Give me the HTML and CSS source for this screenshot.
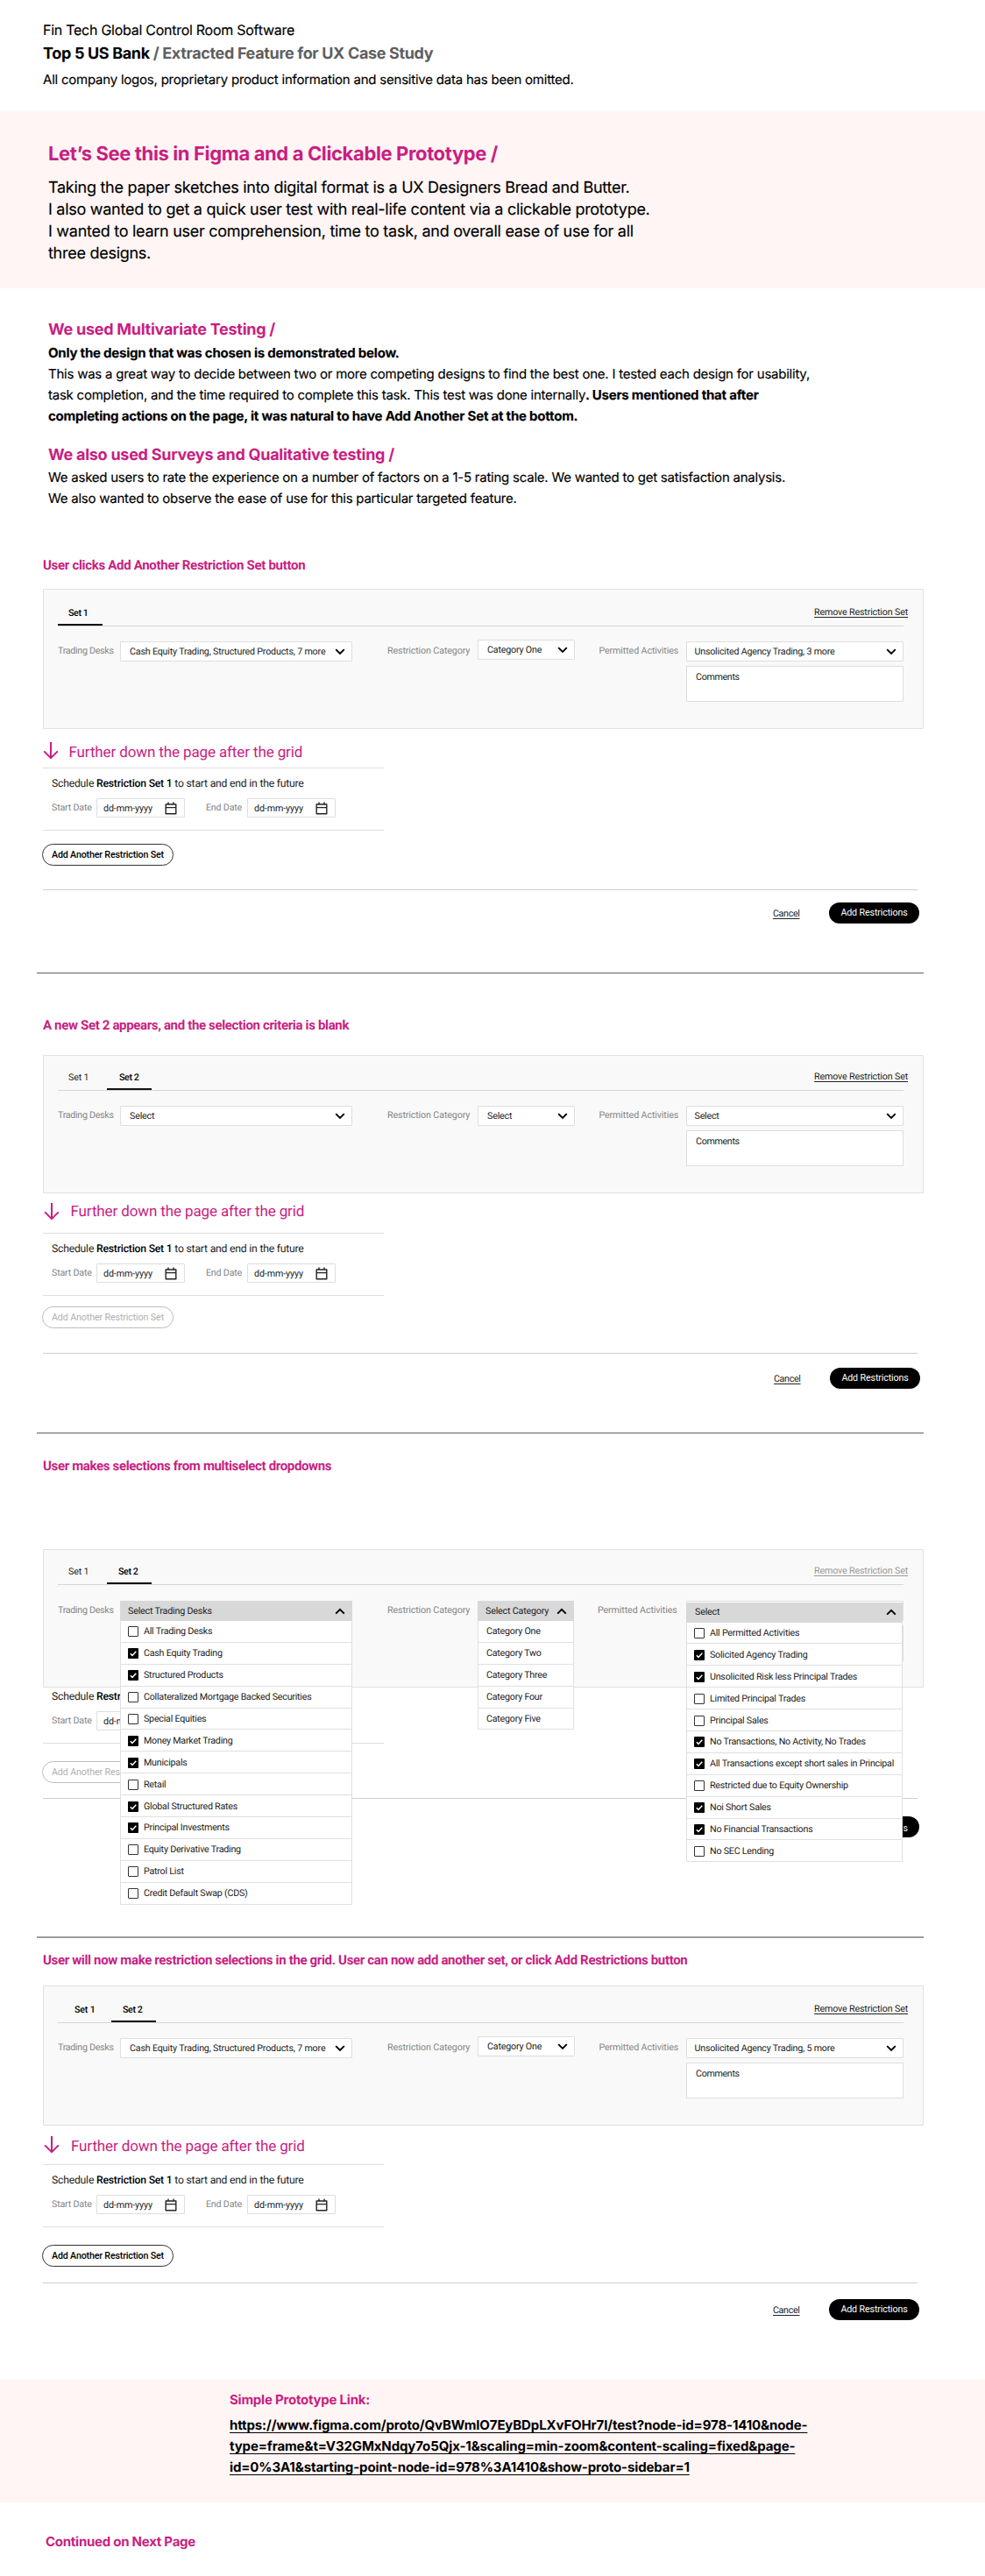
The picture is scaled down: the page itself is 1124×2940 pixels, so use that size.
FILE: index.html
```html
<!DOCTYPE html>
<html lang="en">
<head>
<meta charset="utf-8">
<title>Fin Tech Global Control Room Software</title>
<link rel="stylesheet" href="styles.css">
</head>
<body>
<svg class="sprite" aria-hidden="true">
  <symbol id="down" viewBox="0 0 12 8"><path d="M1.2 1.2 6 6l4.8-4.8" fill="none" stroke="#000" stroke-width="1.9"/></symbol>
  <symbol id="up" viewBox="0 0 12 8"><path d="M1.2 6.6 6 1.8l4.8 4.8" fill="none" stroke="#000" stroke-width="1.9"/></symbol>
  <symbol id="arrow" viewBox="0 0 18 20"><path d="M9 0v18M1.2 10.4 9 18.2l7.8-7.8" fill="none" stroke="#c81e82" stroke-width="2"/></symbol>
  <symbol id="cal" viewBox="0 0 14 15"><path d="M1.2 3h11.6v10.8H1.2zM1.2 6.6h11.6M4 .4v3.4M10 .4v3.4" fill="none" stroke="#222" stroke-width="1.4" stroke-linejoin="round"/></symbol>
  <symbol id="tick" viewBox="0 0 12 12"><path d="M2.8 6.2 5 8.4l4.3-4.6" fill="none" stroke="#fff" stroke-width="1.5"/></symbol>
</svg>

<header class="top">
  <p class="top-kicker">Fin Tech Global Control Room Software</p>
  <h1 class="top-title">Top 5 US Bank <span class="muted">/ Extracted Feature for UX Case Study</span></h1>
  <p class="top-note">All company logos, proprietary product information and sensitive data has been omitted.</p>
</header>

<section class="hero">
  <h2 class="hero-title">Let’s See this in Figma and a Clickable Prototype /</h2>
  <p class="hero-text">Taking the paper sketches into digital format is a UX Designers Bread and Butter.<br>I also wanted to get a quick user test with real-life content via a clickable prototype.<br>I wanted to learn user comprehension, time to task, and overall ease of use for all<br>three designs.</p>
</section>

<section class="notes">
  <h3 class="notes-title">We used Multivariate Testing /</h3>
  <p class="notes-text"><b>Only the design that was chosen is demonstrated below.</b><br>This was a great way to decide between two or more competing designs to find the best one. I tested each design for usability,<br>task completion, and the time required to complete this task. This test was done internally<b>. Users mentioned that after<br>completing actions on the page, it was natural to have Add Another Set at the bottom.</b></p>
  <h3 class="notes-title notes-title-second">We also used Surveys and Qualitative testing /</h3>
  <p class="notes-text">We asked users to rate the experience on a number of factors on a 1-5 rating scale. We wanted to get satisfaction analysis.<br>We also wanted to observe the ease of use for this particular targeted feature.</p>
</section>

<section class="scene scene-one">
  <h4 class="scene-title">User clicks Add Another Restriction Set button</h4>
  <div class="panel">
    <div class="tabs"><span class="tab active">Set 1</span><a class="remove">Remove Restriction Set</a></div>
    <div class="fields">
      <span class="label">Trading Desks</span>
      <div class="select">Cash Equity Trading, Structured Products, 7 more<svg class="chev"><use href="#down"/></svg></div>
      <span class="label label-cat">Restriction Category</span>
      <div class="select raised">Category One<svg class="chev"><use href="#down"/></svg></div>
      <span class="label label-act">Permitted Activities</span>
      <div class="stack"><div class="select">Unsolicited Agency Trading, 3 more<svg class="chev"><use href="#down"/></svg></div><div class="comments">Comments</div></div>
    </div>
  </div>
  <div class="further"><svg class="arrow"><use href="#arrow"/></svg>Further down the page after the grid</div>
  <div class="schedule">
    <p class="schedule-title">Schedule <b>Restriction Set 1</b> to start and end in the future</p>
    <div class="dates"><span class="label">Start Date</span><div class="date">dd-mm-yyyy<svg class="cal"><use href="#cal"/></svg></div><span class="label label-end">End Date</span><div class="date">dd-mm-yyyy<svg class="cal"><use href="#cal"/></svg></div></div>
  </div>
  <button class="pill">Add Another Restriction Set</button>
  <div class="actions"><a class="cancel">Cancel</a><button class="primary">Add Restrictions</button></div>
</section>
<hr class="rule">

<section class="scene scene-two">
  <h4 class="scene-title">A new Set 2 appears, and the selection criteria is blank</h4>
  <div class="panel">
    <div class="tabs"><span class="tab">Set 1</span><span class="tab active">Set 2</span><a class="remove">Remove Restriction Set</a></div>
    <div class="fields">
      <span class="label">Trading Desks</span>
      <div class="select">Select<svg class="chev"><use href="#down"/></svg></div>
      <span class="label label-cat">Restriction Category</span>
      <div class="select">Select<svg class="chev"><use href="#down"/></svg></div>
      <span class="label label-act">Permitted Activities</span>
      <div class="stack"><div class="select">Select<svg class="chev"><use href="#down"/></svg></div><div class="comments">Comments</div></div>
    </div>
  </div>
  <div class="further"><svg class="arrow"><use href="#arrow"/></svg>Further down the page after the grid</div>
  <div class="schedule">
    <p class="schedule-title">Schedule <b>Restriction Set 1</b> to start and end in the future</p>
    <div class="dates"><span class="label">Start Date</span><div class="date">dd-mm-yyyy<svg class="cal"><use href="#cal"/></svg></div><span class="label label-end">End Date</span><div class="date">dd-mm-yyyy<svg class="cal"><use href="#cal"/></svg></div></div>
  </div>
  <button class="pill disabled">Add Another Restriction Set</button>
  <div class="actions"><a class="cancel">Cancel</a><button class="primary">Add Restrictions</button></div>
</section>
<hr class="rule">

<section class="scene scene-three">
  <h4 class="scene-title">User makes selections from multiselect dropdowns</h4>
  <div class="panel">
    <div class="tabs"><span class="tab">Set 1</span><span class="tab active">Set 2</span><a class="remove">Remove Restriction Set</a></div>
    <div class="fields">
      <span class="label">Trading Desks</span>
      <div class="anchor">
        <div class="menu menu-desks">
          <div class="menu-head">Select Trading Desks<svg class="chev"><use href="#up"/></svg></div>
          <div class="option"><span class="box"></span>All Trading Desks</div>
          <div class="option"><span class="box on"><svg><use href="#tick"/></svg></span>Cash Equity Trading</div>
          <div class="option"><span class="box on"><svg><use href="#tick"/></svg></span>Structured Products</div>
          <div class="option"><span class="box"></span>Collateralized Mortgage Backed Securities</div>
          <div class="option"><span class="box"></span>Special Equities</div>
          <div class="option"><span class="box on"><svg><use href="#tick"/></svg></span>Money Market Trading</div>
          <div class="option"><span class="box on"><svg><use href="#tick"/></svg></span>Municipals</div>
          <div class="option"><span class="box"></span>Retail</div>
          <div class="option"><span class="box on"><svg><use href="#tick"/></svg></span>Global Structured Rates</div>
          <div class="option"><span class="box on"><svg><use href="#tick"/></svg></span>Principal Investments</div>
          <div class="option"><span class="box"></span>Equity Derivative Trading</div>
          <div class="option"><span class="box"></span>Patrol List</div>
          <div class="option"><span class="box"></span>Credit Default Swap (CDS)</div>
        </div>
      </div>
      <span class="label label-cat">Restriction Category</span>
      <div class="anchor">
        <div class="menu menu-category">
          <div class="menu-head">Select Category<svg class="chev"><use href="#up"/></svg></div>
          <div class="option">Category One</div>
          <div class="option">Category Two</div>
          <div class="option">Category Three</div>
          <div class="option">Category Four</div>
          <div class="option">Category Five</div>
        </div>
      </div>
      <span class="label label-act">Permitted Activities</span>
      <div class="stack anchor">
        <div class="select"></div><div class="comments"></div>
        <div class="menu menu-activities">
          <div class="menu-head">Select<svg class="chev"><use href="#up"/></svg></div>
          <div class="option"><span class="box"></span>All Permitted Activities</div>
          <div class="option"><span class="box on"><svg><use href="#tick"/></svg></span>Solicited Agency Trading</div>
          <div class="option"><span class="box on"><svg><use href="#tick"/></svg></span>Unsolicited Risk less Principal Trades</div>
          <div class="option"><span class="box"></span>Limited Principal Trades</div>
          <div class="option"><span class="box"></span>Principal Sales</div>
          <div class="option"><span class="box on"><svg><use href="#tick"/></svg></span>No Transactions, No Activity, No Trades</div>
          <div class="option"><span class="box on"><svg><use href="#tick"/></svg></span>All Transactions except short sales in Principal</div>
          <div class="option"><span class="box"></span>Restricted due to Equity Ownership</div>
          <div class="option"><span class="box on"><svg><use href="#tick"/></svg></span>Noi Short Sales</div>
          <div class="option"><span class="box on"><svg><use href="#tick"/></svg></span>No Financial Transactions</div>
          <div class="option"><span class="box"></span>No SEC Lending</div>
        </div>
      </div>
    </div>
  </div>
  <div class="schedule">
    <p class="schedule-title">Schedule <b>Restr</b></p>
    <div class="dates"><span class="label">Start Date</span><div class="date">dd-m</div></div>
  </div>
  <button class="pill disabled pill-covered">Add Another Rest</button>
  <div class="actions"><button class="primary primary-covered">s</button></div>
</section>
<hr class="rule rule-thick">

<section class="scene scene-four">
  <h4 class="scene-title">User will now make restriction selections in the grid. User can now add another set, or click Add Restrictions button</h4>
  <div class="panel">
    <div class="tabs"><span class="tab">Set 1</span><span class="tab active">Set 2</span><a class="remove">Remove Restriction Set</a></div>
    <div class="fields">
      <span class="label">Trading Desks</span>
      <div class="select">Cash Equity Trading, Structured Products, 7 more<svg class="chev"><use href="#down"/></svg></div>
      <span class="label label-cat">Restriction Category</span>
      <div class="select raised">Category One<svg class="chev"><use href="#down"/></svg></div>
      <span class="label label-act">Permitted Activities</span>
      <div class="stack"><div class="select">Unsolicited Agency Trading, 5 more<svg class="chev"><use href="#down"/></svg></div><div class="comments">Comments</div></div>
    </div>
  </div>
  <div class="further"><svg class="arrow"><use href="#arrow"/></svg>Further down the page after the grid</div>
  <div class="schedule">
    <p class="schedule-title">Schedule <b>Restriction Set 1</b> to start and end in the future</p>
    <div class="dates"><span class="label">Start Date</span><div class="date">dd-mm-yyyy<svg class="cal"><use href="#cal"/></svg></div><span class="label label-end">End Date</span><div class="date">dd-mm-yyyy<svg class="cal"><use href="#cal"/></svg></div></div>
  </div>
  <button class="pill">Add Another Restriction Set</button>
  <div class="actions"><a class="cancel">Cancel</a><button class="primary">Add Restrictions</button></div>
</section>

<section class="link-band">
  <h4 class="link-title">Simple Prototype Link:</h4>
  <a class="link">https://www.figma.com/proto/QvBWmIO7EyBDpLXvFOHr7I/test?node-id=978-1410&amp;node-<br>type=frame&amp;t=V32GMxNdqy7o5Qjx-1&amp;scaling=min-zoom&amp;content-scaling=fixed&amp;page-<br>id=0%3A1&amp;starting-point-node-id=978%3A1410&amp;show-proto-sidebar=1</a>
</section>
<p class="continued">Continued on Next Page</p>
</body>
</html>
```
FILE: styles.css
```css
* { box-sizing: border-box; margin: 0; padding: 0; }
body { width: 1124px; height: 2940px; background: #fff; color: #000; font-family: Inter, sans-serif; white-space: nowrap; overflow: hidden; text-rendering: geometricPrecision; }
.sprite { display: block; width: 0; height: 0; }
svg { display: block; flex: none; }

.top { height: 127px; padding: 21px 49px 0; }
.top-kicker { font-size: 16px; line-height: 27px; letter-spacing: -.266px; }
.top-title { font-size: 18px; line-height: 28px; letter-spacing: -.345px; }
.muted { color: #5f5f5f; }
.top-note { font-size: 15px; line-height: 30px; letter-spacing: -.222px; }
.top-kicker, .top-note, .hero-text, .notes-text { -webkit-text-stroke: .15px currentColor; }

.hero { height: 202px; padding: 33px 55px 0; background: #fef5f4; }
.hero-title { font-size: 22px; line-height: 32px; letter-spacing: -.37px; color: #c81e82; }
.hero-text { margin-top: 10px; font-size: 18px; line-height: 25px; letter-spacing: -.272px; }

.notes { height: 306px; padding: 36px 55px 0; }
.notes-title { font-size: 18px; line-height: 24px; letter-spacing: -.262px; color: #c81e82; }
.notes-title-second { margin-top: 21px; margin-bottom: -1px; }
.notes-text { margin-top: 2px; font-size: 15px; line-height: 24px; letter-spacing: -.237px; }
.notes-text b { letter-spacing: -.218px; }

.scene { margin-left: 49px; width: 1005px; font: 10.7px/22px Roboto, sans-serif; letter-spacing: -.18px; color: #222; }
.scene button { font: inherit; letter-spacing: inherit; }
.scene-title { font-size: 15px; line-height: 20px; letter-spacing: -.345px; color: #c81e82; }
.scene-one .scene-title { letter-spacing: -.306px; }
.scene-two { padding-top: 49px; }
.scene-three { padding-top: 27px; }
.scene-four { padding-top: 15px; }

.panel { height: 160px; margin-top: 17px; padding-left: 16px; border: 1px solid #e0e0e0; border-radius: 1px; background: #f9f9f9; }
.scene-two .panel { height: 158px; margin-top: 24px; }
.scene-three .panel { height: 158px; margin-top: 85px; }
.scene-four .panel { margin-top: 19px; }

.tabs { display: flex; gap: 5px; width: 965px; height: 42px; border-bottom: 1px solid #d6d6d6; }
.tab { width: 51px; height: 41px; padding: 16px 0 0 12px; }
.tab.active { color: #000; font-weight: 500; letter-spacing: -.4px; border-bottom: 2px solid #111; }
.tab + .tab { padding-left: 14px; }
.remove { margin: 15px -5px 0 auto; text-decoration: underline; text-underline-offset: 2px; letter-spacing: -.16px; }
.scene-two .tabs, .scene-three .tabs { height: 40px; }
.scene-two .tab, .scene-three .tab { height: 39px; padding-top: 14px; }
.scene-two .remove, .scene-three .remove { margin-top: 13px; }
.scene-three .remove { color: #999; }
.scene-three .tab + .tab { padding-left: 13px; }
.scene-four .tab { padding-left: 19px; color: #000; font-weight: 500; width: 56px; }
.scene-four .tab + .tab { width: 51px; padding-left: 13px; }

.fields { display: grid; grid-template-columns: 71px 265px 143px 111px 127px 248px; align-items: start; margin-top: 17px; }
.label { color: #858585; letter-spacing: -.3px; line-height: 22px; }
.label-cat { padding-left: 40px; letter-spacing: -.122px; }
.label-act { padding-left: 27.5px; letter-spacing: -.12px; }
.select { display: flex; justify-content: space-between; align-items: center; height: 23px; padding: 0 7px 0 10px; border: 1px solid #dedede; border-radius: 1px; background: #fff; }
.stack .select { padding-left: 8.5px; letter-spacing: -.21px; }
.raised { margin-top: -2px; }
.chev { width: 12px; height: 8px; }
.comments { height: 41px; margin-top: 5px; padding: 1px 0 0 10px; border: 1px solid #dedede; background: #fff; letter-spacing: -.33px; }

.anchor { position: relative; height: 23px; }
.scene-three .fields { margin-top: 18px; }
.scene-three .label { line-height: 21px; }
.scene-three .label-act { padding-left: 26px; }
.menu { position: absolute; z-index: 2; left: 0; top: 0; width: 100%; }
.menu-head { display: flex; justify-content: space-between; align-items: center; height: 23px; padding: 0 8px 0 9px; background: #d8d8d8; }
.option { display: flex; align-items: center; gap: 6px; height: 24.9px; padding: 1px 0 0 8px; border: 1px solid #e0e0e0; border-top: 0; background: #fff; letter-spacing: -.23px; }
.menu-category { width: 110px; }
.menu-category .option { padding-left: 9px; }
.menu-activities { top: 1.5px; width: 247px; }
.menu-activities .menu-head { padding: 0 7px 0 10px; }
.box { flex: none; width: 12px; height: 12px; border: 1px solid #333; border-radius: 1px; background: #fff; }
.box.on { border: 0; background: #000; }
.box svg { width: 12px; height: 12px; }

.further { display: flex; height: 24px; margin-top: 15px; font-size: 17px; line-height: 24px; letter-spacing: -.119px; color: #c81e82; }
.arrow { width: 18px; height: 20px; margin-right: 11.5px; }
.scene-two .further { margin-top: 9px; padding-left: 1px; }
.scene-two .arrow { margin-top: 2px; margin-right: 12.5px; }
.scene-four .further { margin-top: 12px; padding-left: 1px; }
.scene-four .arrow { margin-right: 13px; }

.schedule { width: 389px; height: 72px; margin-top: 5px; padding: 7px 0 0 10px; border: solid #dedede; border-width: 1px 0; }
.scene-two .schedule { margin-top: 12px; }
.scene-three .schedule { height: 64px; margin-top: 0; padding-top: 0; border-top: 0; }
.scene-four .schedule { margin-top: 8px; }
.schedule-title { font-size: 12.2px; line-height: 20px; letter-spacing: -.21px; }
.schedule-title b { font-weight: 500; color: #000; }
.dates { display: flex; margin-top: 7px; }
.dates .label { width: 51px; letter-spacing: -.2px; line-height: 22px; }
.dates .label-end { width: 47px; margin-left: 24px; }
.date { display: flex; justify-content: space-between; width: 101px; height: 22px; padding: 0 8px 0 7px; border: 1px solid #dedede; border-radius: 1px; background: #fff; line-height: 21px; letter-spacing: -.1px; }
.cal { width: 14px; height: 15px; margin-top: 3px; }

.pill { display: block; width: 150px; height: 25px; margin: 15px 0 0 -1px; border: 1px solid #333; border-radius: 13px; background: #fff; color: #000; }
.scene .pill { font-weight: 500; }
.scene .pill.disabled { border-color: #bdbdbd; color: #b0b0b0; font-weight: 400; letter-spacing: -.12px; }
.scene-two .pill { margin-top: 12px; }
.scene-three .pill { margin-top: 20px; }
.scene-four .pill { margin-top: 20px; }
.pill-covered { padding-left: 10px; text-align: left; }

.actions { display: flex; justify-content: flex-end; align-items: flex-start; width: 998px; height: 95px; margin-top: 27px; padding-top: 14px; border-top: 1px solid #cfcfcf; }
.cancel { margin: 2px 33.5px 0 0; text-decoration: underline; text-underline-offset: 2px; letter-spacing: -.34px; }
.primary { width: 103px; height: 24px; margin-right: -2px; border: 0; border-radius: 12px; background: #000; color: #fff; }
.scene .primary { letter-spacing: -.135px; }
.scene-two .actions { height: 91px; margin-top: 28px; padding-top: 16px; }
.scene-two .primary { margin-right: -3px; }
.scene-three .actions { height: 158px; margin-top: 17px; padding-top: 20px; }
.primary-covered { padding: 3px 13px 0 0; text-align: right; }
.scene-four .actions { height: 111px; margin-top: 18px; padding-top: 18px; }

.rule { width: 1012px; height: 1px; margin-left: 42px; border: 0; background: #5c5c5c; }
.rule-thick { height: 2px; background: #9c9c9c; }

.link-band { height: 140px; padding: 13px 0 0 262px; background: #fef5f4; font-size: 15px; }
.link-title { font-size: 15px; line-height: 20px; letter-spacing: -.236px; color: #c81e82; }
.link { display: block; margin-top: 7px; font-weight: 700; line-height: 24px; letter-spacing: -.119px; text-decoration: underline; text-underline-offset: 3px; }
.continued { margin: 35px 0 0 52px; font-size: 15px; font-weight: 700; line-height: 20px; letter-spacing: -.254px; color: #c81e82; }
```
